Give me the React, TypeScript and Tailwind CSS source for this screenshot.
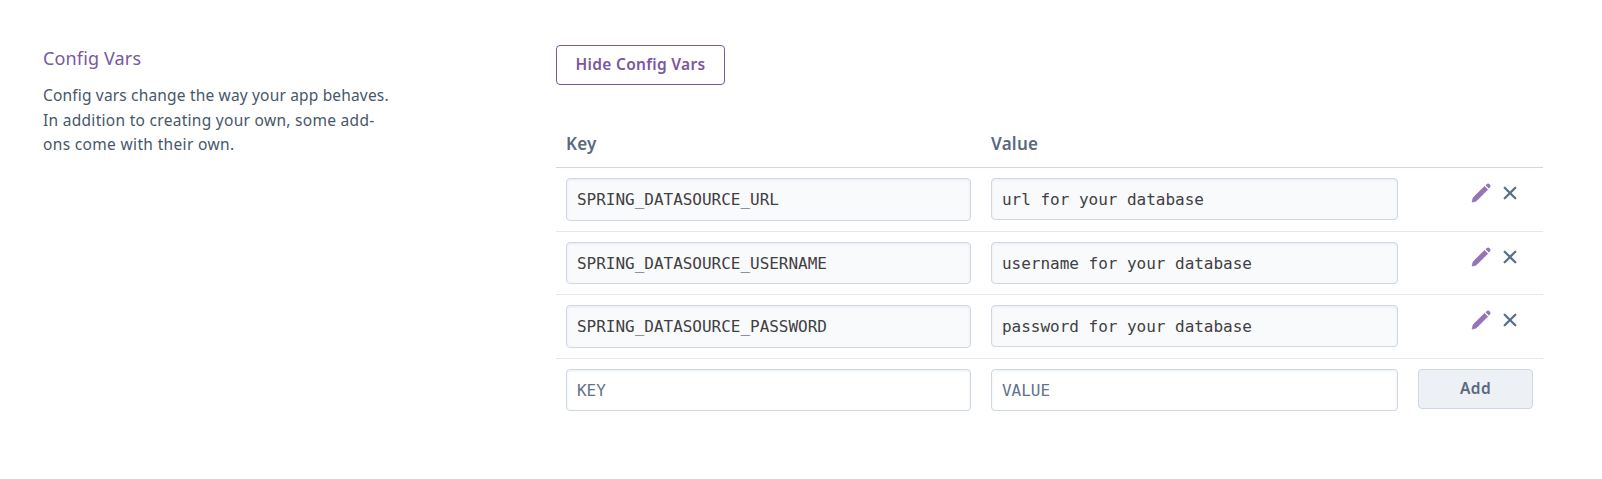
const sans = "font-['Noto_Sans',sans-serif]";
const mono = "font-['DejaVu_Sans_Mono',monospace]";

const vars = [
  { key: 'SPRING_DATASOURCE_URL', value: 'url for your database', row: 'h-16', field: 'h-[43px]' },
  { key: 'SPRING_DATASOURCE_USERNAME', value: 'username for your database', row: 'h-[63px]', field: 'h-[42px]' },
  { key: 'SPRING_DATASOURCE_PASSWORD', value: 'password for your database', row: 'h-16', field: 'h-[43px]' },
];

const fieldBase =
  'block rounded-[4px] border border-[#cfd7e6] px-[10px] text-[16px] tracking-[-0.02px] text-[#3f3f44] shadow-[inset_0_1px_3px_rgba(207,215,230,0.4)] outline-none placeholder:text-[#62738d] placeholder:opacity-100';

function Pencil() {
  return (
    <svg width="20" height="20" viewBox="0 0 20 20" fill="#9673b9" aria-hidden="true">
      <path d="M1.1 19.1 L1.7 16.4 Q2 14.9 3 13.8 L13.5 3.4 L16.7 6.6 L6.3 17 Q5.2 18.1 3.8 18.5 Z" stroke="#9673b9" strokeWidth="0.8" strokeLinejoin="round" />
      <path d="M14.6 2.3 L15.8 1.1 Q17.2 -0.1 18.5 1.2 L18.9 1.6 Q20 2.9 19 4.2 L17.8 5.5 Z" />
    </svg>
  );
}

function Cross() {
  return (
    <svg width="14" height="14" viewBox="0 0 14 14" fill="none" stroke="#5a6f8c" strokeWidth="2.3" strokeLinecap="round" aria-hidden="true">
      <path d="M1.7 1.7 L12.3 12.3 M12.3 1.7 L1.7 12.3" />
    </svg>
  );
}

export default function App() {
  return (
    <main className={`flex h-[479px] w-[1602px] bg-white ${sans}`}>
      <section className="w-[556px] shrink-0 pl-[43px] pt-[43px]">
        <h2 className="text-[18px] leading-[30px] tracking-[0.15px] text-[#79589f]">Config Vars</h2>
        <p className="mt-[10px] whitespace-nowrap text-[15.5px] leading-[24.5px] text-[#475769]">
          <span className="tracking-[0.17px]">Config vars change the way your app behaves.</span>
          <br />
          <span className="tracking-[0.29px]">In addition to creating your own, some add-</span>
          <br />
          <span className="tracking-[0.34px]">ons come with their own.</span>
        </p>
      </section>

      <section className="w-[987px] pt-[45px]">
        <button className="flex h-10 w-[169px] items-center justify-center rounded-[4px] border border-[#79589f] text-[15.5px] font-semibold tracking-[0.3px] text-[#79589f]">
          Hide Config Vars
        </button>

        <div className="mt-[35px] flex h-12 border-b border-[#cfd7e6] pt-[10px] text-[17px] font-semibold leading-[28px] tracking-[0.25px] text-[#596981]">
          <div className="w-[425px] pl-[10px]">Key</div>
          <div className="pl-[10px]">Value</div>
        </div>

        {vars.map((v) => (
          <div key={v.key} className={`flex items-start border-b border-[#e3e8f2] pl-[10px] pt-[10px] ${v.row}`}>
            <input className={`${fieldBase} ${mono} ${v.field} w-[405px] bg-[#f9fafc]`} defaultValue={v.key} readOnly />
            <input className={`${fieldBase} ${mono} ml-5 h-[42px] w-[407px] bg-[#f9fafc]`} defaultValue={v.value} readOnly />
            <div className="ml-[73px] mt-[5px] flex items-center gap-[12px]">
              <button aria-label="Edit"><Pencil /></button>
              <button aria-label="Remove"><Cross /></button>
            </div>
          </div>
        ))}

        <div className="flex items-start pl-[10px] pt-[10px]">
          <input className={`${fieldBase} ${mono} h-[42px] w-[405px] bg-white`} placeholder="KEY" />
          <input className={`${fieldBase} ${mono} ml-5 h-[42px] w-[407px] bg-white`} placeholder="VALUE" />
          <button className="ml-5 flex h-10 w-[115px] items-center justify-center rounded-[4px] border border-[#cfd7e6] bg-[#edf0f5] text-[15.5px] font-semibold tracking-[0.4px] text-[#596981]">
            Add
          </button>
        </div>
      </section>
    </main>
  );
}
